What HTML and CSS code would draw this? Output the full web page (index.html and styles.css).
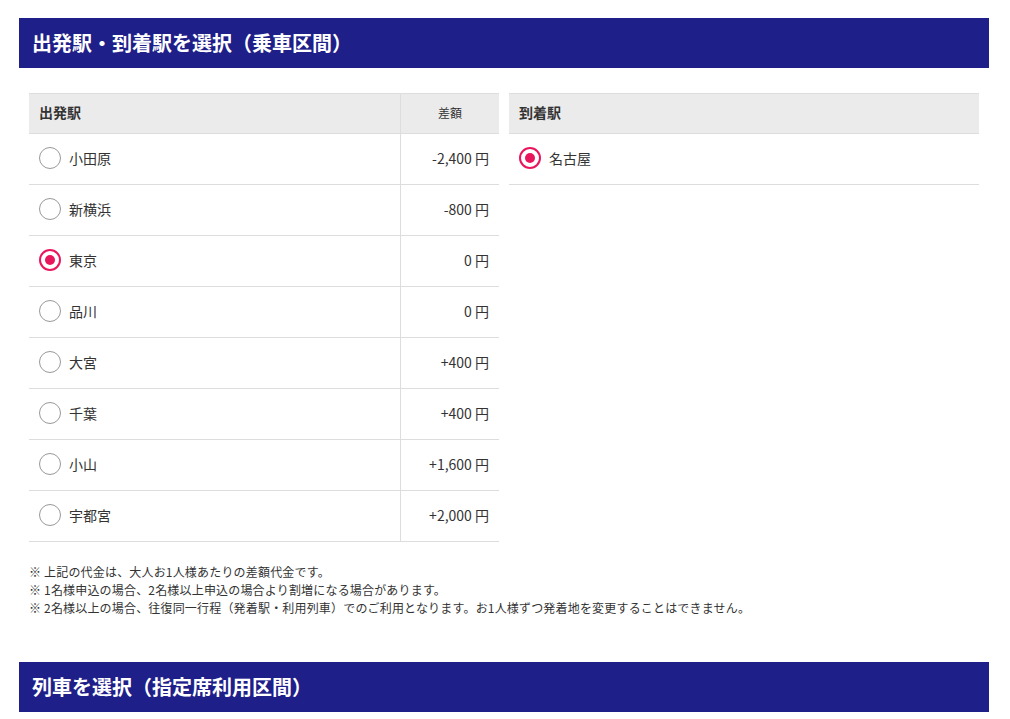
FILE: index.html
```html
<!doctype html>
<html lang="ja">
<head>
    <meta charset="UTF-8">
    <title>出発駅・到着駅を選択</title>
    <link rel="stylesheet" href="styles.css">
</head>
<body>
<div class="page">

    <h2 class="section-title">出発駅・到着駅を選択（乗車区間）</h2>

    <div class="section-body">
        <div class="tables">
            <!--出発駅-->
            <table class="station-table">
                <thead>
                <tr>
                    <th class="col-name">出発駅</th>
                    <th class="col-diff">差額</th>
                </tr>
                </thead>
                <tbody>
                <tr>
                    <td class="col-name"><label><input type="radio" name="from" value="odawara"><span class="radio"></span>小田原</label></td>
                    <td class="col-diff">-2,400 円</td>
                </tr>
                <tr>
                    <td class="col-name"><label><input type="radio" name="from" value="shinyokohama"><span class="radio"></span>新横浜</label></td>
                    <td class="col-diff">-800 円</td>
                </tr>
                <tr>
                    <td class="col-name"><label><input type="radio" name="from" value="tokyo" checked><span class="radio"></span>東京</label></td>
                    <td class="col-diff">0 円</td>
                </tr>
                <tr>
                    <td class="col-name"><label><input type="radio" name="from" value="shinagawa"><span class="radio"></span>品川</label></td>
                    <td class="col-diff">0 円</td>
                </tr>
                <tr>
                    <td class="col-name"><label><input type="radio" name="from" value="omiya"><span class="radio"></span>大宮</label></td>
                    <td class="col-diff">+400 円</td>
                </tr>
                <tr>
                    <td class="col-name"><label><input type="radio" name="from" value="chiba"><span class="radio"></span>千葉</label></td>
                    <td class="col-diff">+400 円</td>
                </tr>
                <tr>
                    <td class="col-name"><label><input type="radio" name="from" value="oyama"><span class="radio"></span>小山</label></td>
                    <td class="col-diff">+1,600 円</td>
                </tr>
                <tr>
                    <td class="col-name"><label><input type="radio" name="from" value="utsunomiya"><span class="radio"></span>宇都宮</label></td>
                    <td class="col-diff">+2,000 円</td>
                </tr>
                </tbody>
            </table>

            <!--到着駅-->
            <table class="station-table">
                <thead>
                <tr>
                    <th class="col-name">到着駅</th>
                </tr>
                </thead>
                <tbody>
                <tr>
                    <td class="col-name"><label><input type="radio" name="to" value="nagoya" checked><span class="radio"></span>名古屋</label></td>
                </tr>
                </tbody>
            </table>
        </div>

        <ul class="notes">
            <li>※ 上記の代金は、大人お1人様あたりの差額代金です。</li>
            <li>※ 1名様申込の場合、2名様以上申込の場合より割増になる場合があります。</li>
            <li>※ 2名様以上の場合、往復同一行程（発着駅・利用列車）でのご利用となります。お1人様ずつ発着地を変更することはできません。</li>
        </ul>
    </div>

    <h2 class="section-title">列車を選択（指定席利用区間）</h2>

</div>
</body>
</html>
```

FILE: styles.css
```css
body {
    margin: 0;
    font-family: "Noto Sans CJK JP", "Noto Sans", sans-serif;
    color: #333;
    background: #fff;
}

.page {
    padding: 18px 21px 0 19px;
}

.section-title {
    margin: 0;
    height: 50px;
    line-height: 50px;
    padding: 0 13px;
    background: #1f1f8a;
    color: #fff;
    font-size: 20px;
    font-weight: bold;
}

.section-body {
    padding: 25px 10px 45px;
}

.tables {
    display: flex;
    gap: 10px;
    align-items: flex-start;
}

.station-table {
    flex: 1;
    border-collapse: collapse;
    font-size: 14px;
}

/*高さ = height + padding*/
.station-table th {
    height: 36px;
    padding: 0 10px 3px;
    background: #ebebeb;
    border-top: 1px solid #ddd;
    border-bottom: 1px solid #ddd;
    text-align: left;
    font-weight: bold;
    font-size: 14px;
}

.station-table th.col-diff {
    width: 78px;
    text-align: center;
    font-weight: normal;
    font-size: 12px;
    border-left: 1px solid #ddd;
}

.station-table td {
    height: 48px;
    padding: 0 10px 2px;
    border-bottom: 1px solid #ddd;
}

.station-table td.col-diff {
    text-align: right;
    border-left: 1px solid #ddd;
}

.station-table label {
    display: flex;
    align-items: center;
    cursor: pointer;
}

/*ラジオは自前で描く*/
.station-table input[type=radio] {
    display: none;
}

.radio {
    width: 20px;
    height: 20px;
    margin-right: 8px;
    border: 1px solid #999;
    border-radius: 50%;
    position: relative;
    flex-shrink: 0;
}

input[type=radio]:checked + .radio {
    width: 18px;
    height: 18px;
    border: 2px solid #e8175d;
}

input[type=radio]:checked + .radio::after {
    content: "";
    position: absolute;
    top: 4px;
    left: 4px;
    width: 10px;
    height: 10px;
    border-radius: 50%;
    background: #e8175d;
}

.notes {
    list-style: none;
    margin: 21px 0 0;
    padding: 0;
    font-size: 12px;
    line-height: 18px;
    letter-spacing: 0.18px;
}
```
